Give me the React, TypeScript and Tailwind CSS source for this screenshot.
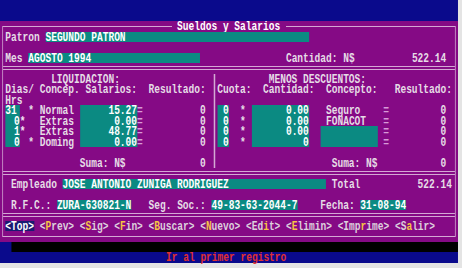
import type { ReactNode } from "react";

const TEAL = "bg-[#0b8a82] text-white";

// text-mode screen: 80 cols x 25 rows, each cell 7.5 x 10.5 before the horizontal squeeze
const fld = (text: string, n: number, right = false) => (
  <span className={TEAL}>{right ? text.padStart(n) : text.padEnd(n)}</span>
);

function Row({ children }: { children?: ReactNode }) {
  return <div className="flex h-[10.5px] whitespace-pre [&>*]:pt-[2px]">{children}</div>;
}

function DoubleLine() {
  return (
    <div className="-mx-[3px] flex h-[10.5px] flex-col justify-center gap-[2px]">
      <div className="h-px bg-[#d4a8d4]" />
      <div className="h-px bg-[#d4a8d4]" />
    </div>
  );
}

const dias = [
  { d: "31", right: false, star: "", concept: "* Normal ", sal: "15.27" },
  { d: "0", right: true, star: "*", concept: "  Extras ", sal: "0.00" },
  { d: "1", right: true, star: "*", concept: "  Extras ", sal: "48.77" },
  { d: "0", right: true, star: "", concept: "* Doming ", sal: "0.00" },
];

const descuentos = [
  { cant: "0.00", con: "Seguro" },
  { cant: "0.00", con: "FONACOT" },
  { cant: "0.00", con: "" },
  { cant: "0", con: "" },
];

const menu = [
  { pre: "", hot: "P", post: "rev" },
  { pre: "", hot: "S", post: "ig" },
  { pre: "", hot: "F", post: "in" },
  { pre: "", hot: "B", post: "uscar" },
  { pre: "", hot: "N", post: "uevo" },
  { pre: "Ed", hot: "i", post: "t" },
  { pre: "", hot: "E", post: "limin" },
  { pre: "Imp", hot: "r", post: "ime" },
  { pre: "S", hot: "a", post: "lir" },
];

export default function App() {
  return (
    <div className="h-[268px] w-[462px] overflow-hidden bg-[#e4e4e4]">
      <div className="h-[262.5px] w-[600px] origin-top-left scale-x-[0.7633] bg-[#0a0a8c] font-['Liberation_Mono',monospace] text-[12.5px] leading-[8.5px] font-bold">
        <div className="h-[21px]" />

        {/* window */}
        <div className="h-[220.5px] bg-[#850a85] text-[#e6dce6]">
          <fieldset className="mx-[3px] border-[1.5px] border-[#d4a8d4] px-[3px] pb-[4.5px]">
            <legend className="ml-[29ch] h-[10.5px] whitespace-pre pt-[2px] text-white">
              {" Sueldos y Salarios "}
            </legend>

            <Row>
              <span>{"Patron "}</span>
              {fld("SEGUNDO PATRON", 46)}
            </Row>
            <Row />
            <Row>
              <span>{"Mes "}</span>
              {fld("AGOSTO 1994", 30)}
              <span>{" ".repeat(15) + "Cantidad: N$" + "522.14".padStart(16)}</span>
            </Row>
            <DoubleLine />

            <div className="flex">
              <div className="w-[36ch]">
                <Row>
                  <span>{"        LIQUIDACION:"}</span>
                </Row>
                <Row>
                  <span>{"Dias/ Concep. Salarios:  Resultado:"}</span>
                </Row>
                <Row>
                  <span>Hrs</span>
                </Row>
                {dias.map((r, i) => (
                  <Row key={i}>
                    <span className={`w-[2.5ch] ${TEAL} ${r.right ? "text-right" : ""}`}>{r.d}</span>
                    <span className="w-[1.5ch] text-[#f4e4f4]">{r.star}</span>
                    <span>{r.concept}</span>
                    {fld(r.sal, 10, true)}
                    <span className="text-[#d89ad8]">=</span>
                    <span>{"0".padStart(11)}</span>
                  </Row>
                ))}
                <Row />
                <Row>
                  <span>{" ".repeat(13) + "Suma: N$" + "0".padStart(14)}</span>
                </Row>
              </div>

              <div className="flex w-[1ch] justify-center">
                <div className="w-[1.5px] bg-[#d4a8d4]" />
              </div>

              <div className="w-[41ch]">
                <Row>
                  <span>{"         MENOS DESCUENTOS:"}</span>
                </Row>
                <Row>
                  <span>{"Cuota:  Cantidad:  Concepto:   Resultado:"}</span>
                </Row>
                <Row />
                {descuentos.map((r, i) => (
                  <Row key={i}>
                    {fld("0", 2, true)}
                    <span>{"  * "}</span>
                    {fld(r.cant, 10, true)}
                    {r.con ? (
                      <span>{"   " + r.con.padEnd(10)}</span>
                    ) : (
                      <>
                        <span>{"  "}</span>
                        {fld("", 10)}
                        <span> </span>
                      </>
                    )}
                    <span className="text-[#d89ad8]">=</span>
                    <span>{"0".padStart(10)}</span>
                  </Row>
                ))}
                <Row />
                <Row>
                  <span>{" ".repeat(20) + "Suma: N$" + "0".padStart(12)}</span>
                </Row>
              </div>
            </div>

            <DoubleLine />
            <Row>
              <span>{" Empleado "}</span>
              {fld("JOSE ANTONIO ZUNIGA RODRIGUEZ", 46)}
              <span>{" Total" + "522.14".padStart(16)}</span>
            </Row>
            <Row />
            <Row>
              <span>{" R.F.C.: "}</span>
              {fld("ZURA-630821-N", 13)}
              <span>{"   Seg. Soc.: "}</span>
              {fld("49-83-63-2044-7", 15)}
              <span>{"    Fecha: "}</span>
              {fld("31-08-94", 8)}
            </Row>
            <DoubleLine />
            <Row>
              <span className="bg-[#1a1a72] text-white">{"<Top>"}</span>
              {menu.map((m, i) => (
                <span key={i} className="text-[#ddd0dd]">
                  {" <" + m.pre}
                  <span className="text-[#f6c443]">{m.hot}</span>
                  {m.post + ">"}
                </span>
              ))}
            </Row>
          </fieldset>
        </div>

        {/* shadow of the window */}
        <div className="flex h-[10.5px]">
          <div className="w-[2ch]" />
          <div className="flex-1 bg-black" />
        </div>

        {/* status line */}
        <div className="h-[10.5px] whitespace-pre pl-[29ch] pt-[2px] text-[#e03030]">Ir al primer registro</div>
      </div>
    </div>
  );
}
